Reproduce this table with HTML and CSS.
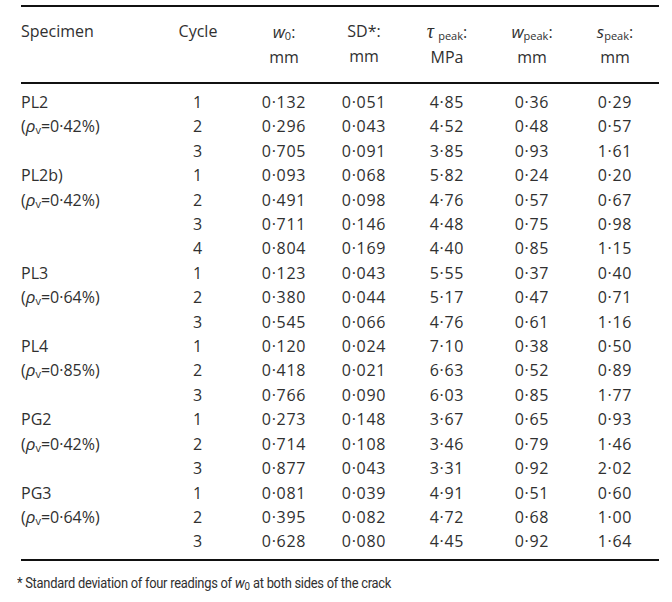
FILE: index.html
```html
<!DOCTYPE html>
<html>
<head>
<meta charset="utf-8">
<link rel="stylesheet" href="styles.css">
</head>
<body>
<div class="wrap">
<table class="data">
<colgroup>
<col class="c-spec"><col class="c-cyc"><col class="c-w0"><col class="c-sd"><col class="c-tau"><col class="c-wp"><col class="c-sp">
</colgroup>
<thead>
<tr>
<th class="spec">Specimen</th>
<th>Cycle</th>
<th><i>w</i><sub>0</sub>:<br>mm</th>
<th>SD*:<br>mm</th>
<th><i class="tau">τ</i> <sub>peak</sub>:<br>MPa</th>
<th><i>w</i><sub>peak</sub>:<br>mm</th>
<th><i>s</i><sub>peak</sub>:<br>mm</th>
</tr>
</thead>
<tbody>
<tr class="first"><td class="spec">PL2</td><td>1</td><td>0·132</td><td>0·051</td><td>4·85</td><td>0·36</td><td>0·29</td></tr>
<tr><td class="spec">(<i>ρ</i><sub>v</sub>=0·42%)</td><td>2</td><td>0·296</td><td>0·043</td><td>4·52</td><td>0·48</td><td>0·57</td></tr>
<tr><td class="spec"></td><td>3</td><td>0·705</td><td>0·091</td><td>3·85</td><td>0·93</td><td>1·61</td></tr>
<tr><td class="spec">PL2b)</td><td>1</td><td>0·093</td><td>0·068</td><td>5·82</td><td>0·24</td><td>0·20</td></tr>
<tr><td class="spec">(<i>ρ</i><sub>v</sub>=0·42%)</td><td>2</td><td>0·491</td><td>0·098</td><td>4·76</td><td>0·57</td><td>0·67</td></tr>
<tr><td class="spec"></td><td>3</td><td>0·711</td><td>0·146</td><td>4·48</td><td>0·75</td><td>0·98</td></tr>
<tr><td class="spec"></td><td>4</td><td>0·804</td><td>0·169</td><td>4·40</td><td>0·85</td><td>1·15</td></tr>
<tr><td class="spec">PL3</td><td>1</td><td>0·123</td><td>0·043</td><td>5·55</td><td>0·37</td><td>0·40</td></tr>
<tr><td class="spec">(<i>ρ</i><sub>v</sub>=0·64%)</td><td>2</td><td>0·380</td><td>0·044</td><td>5·17</td><td>0·47</td><td>0·71</td></tr>
<tr><td class="spec"></td><td>3</td><td>0·545</td><td>0·066</td><td>4·76</td><td>0·61</td><td>1·16</td></tr>
<tr><td class="spec">PL4</td><td>1</td><td>0·120</td><td>0·024</td><td>7·10</td><td>0·38</td><td>0·50</td></tr>
<tr><td class="spec">(<i>ρ</i><sub>v</sub>=0·85%)</td><td>2</td><td>0·418</td><td>0·021</td><td>6·63</td><td>0·52</td><td>0·89</td></tr>
<tr><td class="spec"></td><td>3</td><td>0·766</td><td>0·090</td><td>6·03</td><td>0·85</td><td>1·77</td></tr>
<tr><td class="spec">PG2</td><td>1</td><td>0·273</td><td>0·148</td><td>3·67</td><td>0·65</td><td>0·93</td></tr>
<tr><td class="spec">(<i>ρ</i><sub>v</sub>=0·42%)</td><td>2</td><td>0·714</td><td>0·108</td><td>3·46</td><td>0·79</td><td>1·46</td></tr>
<tr><td class="spec"></td><td>3</td><td>0·877</td><td>0·043</td><td>3·31</td><td>0·92</td><td>2·02</td></tr>
<tr><td class="spec">PG3</td><td>1</td><td>0·081</td><td>0·039</td><td>4·91</td><td>0·51</td><td>0·60</td></tr>
<tr><td class="spec">(<i>ρ</i><sub>v</sub>=0·64%)</td><td>2</td><td>0·395</td><td>0·082</td><td>4·72</td><td>0·68</td><td>1·00</td></tr>
<tr class="last"><td class="spec"></td><td>3</td><td>0·628</td><td>0·080</td><td>4·45</td><td>0·92</td><td>1·64</td></tr>
</tbody>
</table>
<p class="note"><span class="note-text">* Standard deviation of four readings of <i>w</i><sub>0</sub> at both sides of the crack</span></p>
</div>
</body>
</html>
```

FILE: styles.css
```css
html, body {
  margin: 0;
  padding: 0;
  background: #ffffff;
}
body {
  font-family: "Open Sans", "Noto Sans", "DejaVu Sans", sans-serif;
  font-size: 16px;
  color: #303030;
}
.wrap {
  padding: 5px 0 0 21px;
}
.data {
  width: 638px;
  table-layout: fixed;
  border-collapse: collapse;
  border-top: 2px solid #111;
  border-bottom: 2px solid #111;
}
.c-spec { width: 134px; }
.c-cyc { width: 86px; }
.c-w0 { width: 86px; }
.c-sd { width: 74px; }
.c-tau { width: 92px; }
.c-wp { width: 78px; }
.c-sp { width: 88px; }
.data th, .data td {
  padding: 0;
  text-align: center;
  font-weight: normal;
  white-space: nowrap;
}
.data thead th {
  line-height: 25px;
  padding: 12px 0 12px;
  vertical-align: top;
  border-bottom: 2px solid #111;
}
.data td {
  line-height: 24.4px;
  height: 24.4px;
  letter-spacing: 0.7px;
}
.data td.spec {
  text-align: left;
  letter-spacing: 0;
}
.data th.spec {
  text-align: left;
}
.data tr.first td {
  padding-top: 6px;
}
.data tr.last td {
  padding-bottom: 5px;
}
sub {
  font-size: 11px;
  vertical-align: -2px;
  line-height: 0;
  letter-spacing: 0;
}
i {
  font-style: italic;
  font-size: 17px;
}
i.tau {
  font-family: "Liberation Serif", "DejaVu Serif", serif;
  font-size: 20px;
}
.note {
  margin: 10px 0 0 -4px;
  font-family: "Roboto", "Open Sans", sans-serif;
  font-size: 14.5px;
  letter-spacing: -0.3px;
  line-height: 24px;
  white-space: nowrap;
}
.note-text {
  display: inline-block;
  transform: scaleX(0.89);
  transform-origin: left center;
}
.note i {
  font-size: 15.5px;
}
```
